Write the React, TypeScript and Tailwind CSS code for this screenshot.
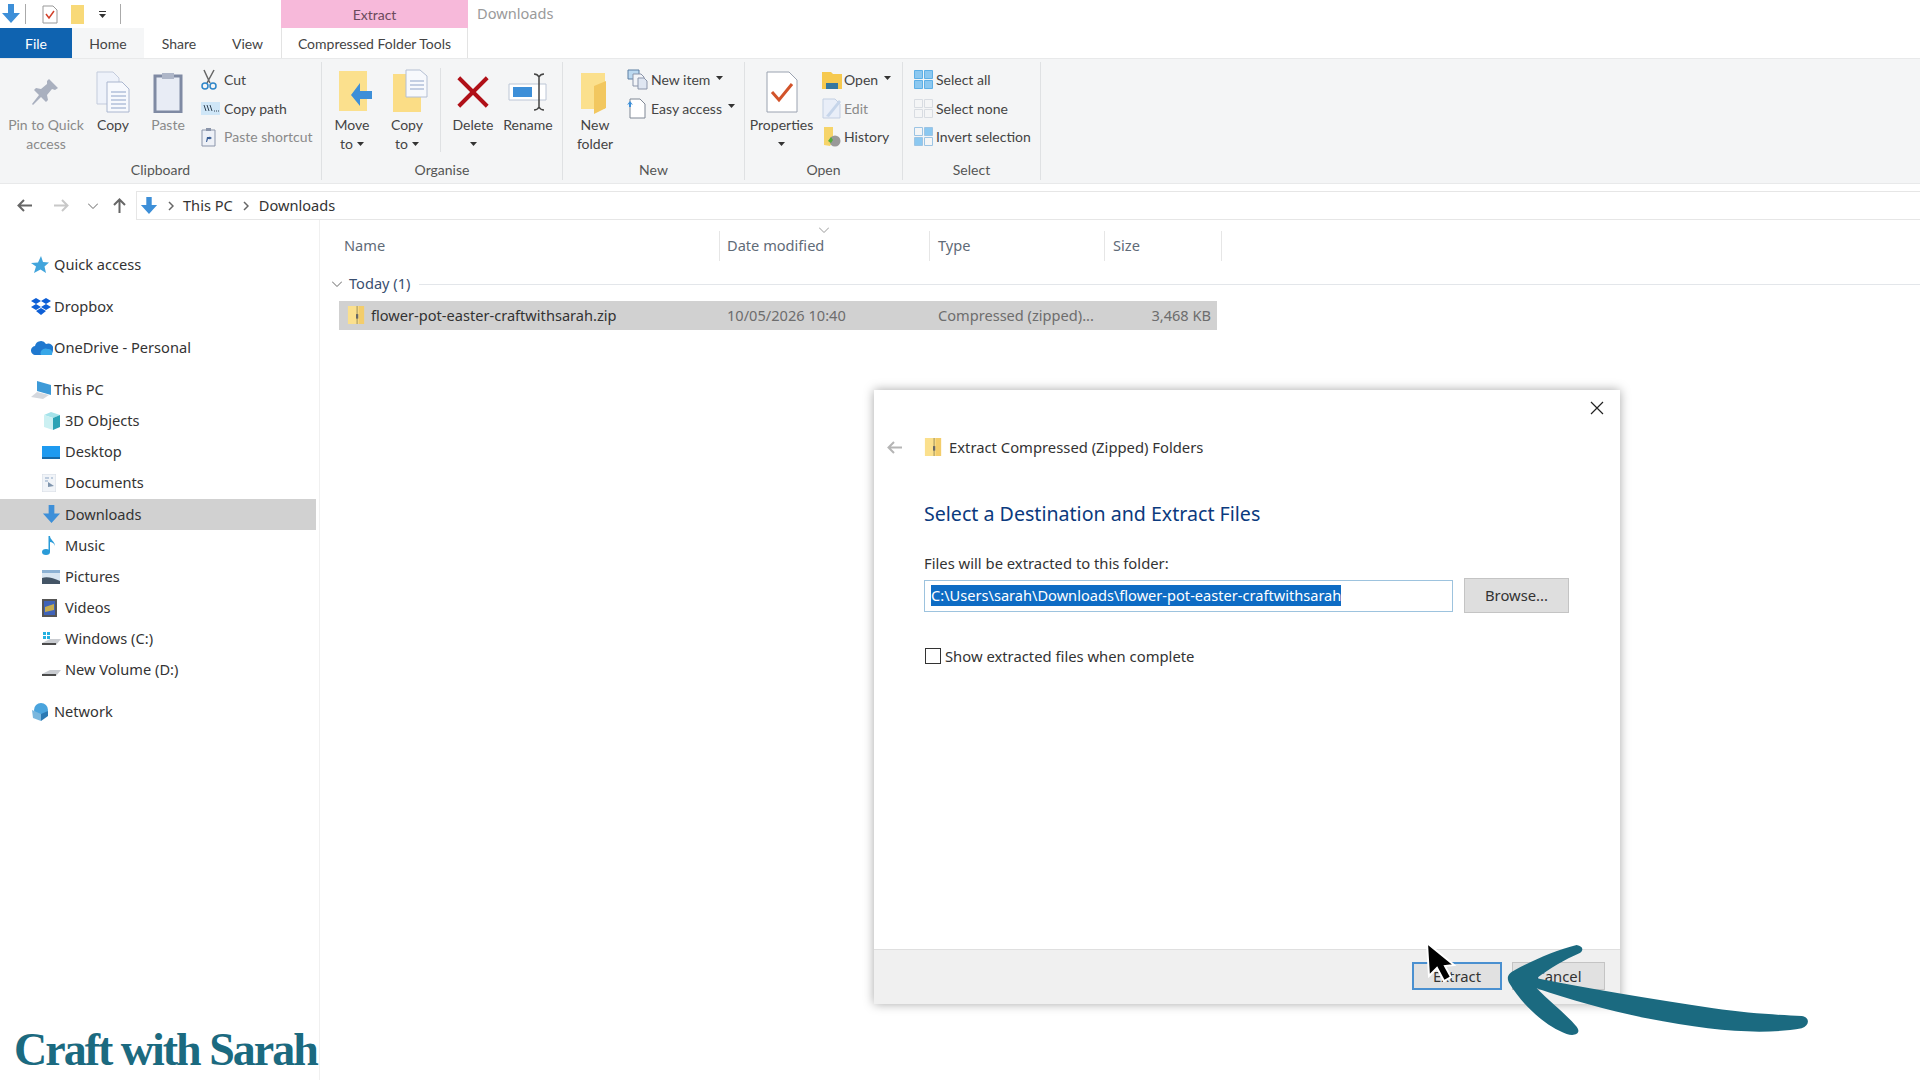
import type { ReactNode } from "react";

const Caret = () => (
  <svg width="7" height="4" viewBox="0 0 7 4" className="inline-block">
    <path d="M0 0h7L3.5 4z" fill="#333" />
  </svg>
);

const DownArrow = ({ size = 20 }: { size?: number }) => (
  <svg width={size} height={size} viewBox="0 0 20 20">
    <path d="M7 0h6v9h6l-9 10L1 9h6z" fill="#3d8fd8" />
  </svg>
);

const Zip = ({ size = 20 }: { size?: number }) => (
  <svg width={size} height={size} viewBox="0 0 20 20">
    <path d="M1 0h18v20H1z" fill="#fbe08d" />
    <path d="M13 0h6v20h-6z" fill="#f3cd6b" />
    <path d="M10.5 0h1.5v20h-1.5z" fill="#b5a468" />
    <path d="M10 9h2.5v5H10z" fill="#666" />
  </svg>
);

const FolderFlat = () => (
  <svg width="34" height="46" viewBox="0 0 34 46">
    <path d="M3 4h24v36H3z" fill="#fbe08d" />
    <path d="M16 17l12-5v27l-12 6z" fill="#f2c75f" />
  </svg>
);

const Pin = () => (
  <svg width="30" height="30" viewBox="0 0 30 30">
    <path d="M18 2l9 9-3 2-3-1-5 6 1 5-2 2-5-5-8 8-1-1 7-9-5-5 2-2 5 1 6-5 0-3z" fill="#a9b0bf" />
  </svg>
);

const CopyBig = () => (
  <svg width="34" height="42" viewBox="0 0 34 42">
    <path d="M1 1h16l6 6v26H1z" fill="#eef2fa" stroke="#c3cbdc" />
    <path d="M11 11h15l7 7v23H11z" fill="#f7f9fd" stroke="#aab6cf" />
    <path d="M15 21h15M15 25h15M15 29h15M15 33h15M15 37h15" stroke="#8fa3c8" />
  </svg>
);

const PasteBig = () => (
  <svg width="30" height="42" viewBox="0 0 30 42">
    <path d="M2 5h26v36H2z" fill="#e8ecf5" stroke="#7f8aa3" strokeWidth="3" />
    <path d="M9 2h12v6H9z" fill="#aeb6c8" />
  </svg>
);

const Scissors = () => (
  <svg width="16" height="22" viewBox="0 0 16 22">
    <path d="M3 1l6 13M13 1L6 14" stroke="#666" strokeWidth="1.5" />
    <circle cx="4" cy="17" r="3" fill="none" stroke="#2f86c9" strokeWidth="1.5" />
    <circle cx="12" cy="17" r="3" fill="none" stroke="#2f86c9" strokeWidth="1.5" />
  </svg>
);

const CopyPath = () => (
  <svg width="19" height="13" viewBox="0 0 19 13">
    <path d="M0 0h19v13H0z" fill="#cfe6f7" />
    <path d="M3 3l2 6M6 3l2 6M9 3l2 6" stroke="#345" strokeWidth="1" />
    <path d="M13 9h1M15 9h1M17 9h1" stroke="#345" />
  </svg>
);

const PasteShortcut = () => (
  <svg width="15" height="20" viewBox="0 0 15 20">
    <path d="M1 3h13v16H1z" fill="#eef1f7" stroke="#8b95aa" />
    <path d="M5 1h5v3H5z" fill="#8b95aa" />
    <path d="M5 15l1-5h3l-1-1 3 2-3 2 1-1H7l-1 3z" fill="#3b5f95" />
  </svg>
);

const MoveTo = () => (
  <svg width="38" height="44" viewBox="0 0 38 44" className="translate-x-[5px]">
    <path d="M1 1h28v40H1z" fill="#fbe08d" />
    <path d="M34 21H22v-8L13 25l9 11v-7h12z" fill="#3d8fd8" />
  </svg>
);

const CopyTo = () => (
  <svg width="36" height="46" viewBox="0 0 36 46" className="translate-x-[3px]">
    <path d="M1 5h28v38H1z" fill="#fbdd86" />
    <path d="M14 1h14l7 6v21H14z" fill="#f7f9fd" stroke="#b4bfd3" />
    <path d="M18 12h14M18 16h14M18 20h14" stroke="#8fa3c8" />
  </svg>
);

const RedX = () => (
  <svg width="32" height="32" viewBox="0 0 36 36">
    <path d="M2 2l32 32M34 2L2 34" stroke="#b01018" strokeWidth="4.5" />
  </svg>
);

const RenameIcon = () => (
  <svg width="40" height="38" viewBox="0 0 40 38">
    <path d="M1 11h37v16H1z" fill="#fff" stroke="#bcc6d6" />
    <path d="M5 14h19v10H5z" fill="#3d8fd8" />
    <path d="M26 1c2 0 4 1 5 3 1-2 3-3 5-3M31 4v30M26 37c2 0 4-1 5-3 1 2 3 3 5 3" fill="none" stroke="#444" strokeWidth="1.5" />
  </svg>
);

const NewItem = () => (
  <svg width="21" height="21" viewBox="0 0 21 21">
    <path d="M1 1h11v9H1z" fill="#bcd9f0" stroke="#5d7ea3" />
    <path d="M6 5h8l3 3v9H6z" fill="#f2f4f8" stroke="#8b95aa" />
    <path d="M11 9h6l3 3v8h-9z" fill="#dfe6f2" stroke="#8b95aa" />
  </svg>
);

const EasyAccess = () => (
  <svg width="19" height="22" viewBox="0 0 19 22">
    <path d="M3 2h10l5 5v14H3z" fill="#fff" stroke="#7f8794" />
    <path d="M0 8l3-4 3 4-2-1v3H2V7z" fill="#3d8fd8" />
  </svg>
);

const PropertiesIcon = () => (
  <svg width="32" height="42" viewBox="0 0 32 42">
    <path d="M1 1h22l8 8v32H1z" fill="#fff" stroke="#9aa2b0" />
    <path d="M6 21l7 8L26 13" fill="none" stroke="#d2532a" strokeWidth="3" />
  </svg>
);

const OpenIcon = () => (
  <svg width="20" height="18" viewBox="0 0 20 18">
    <path d="M0 1h9l2 2h9v15H0z" fill="#f6c94f" />
    <path d="M4 12h12v6H4z" fill="#35779f" />
  </svg>
);

const EditIcon = () => (
  <svg width="20" height="21" viewBox="0 0 20 21">
    <path d="M1 1h12l5 5v14H1z" fill="#e9eef8" stroke="#c3cfe2" />
    <path d="M4 18L17 2l2 2L7 19z" fill="#c6d5ea" />
  </svg>
);

const HistoryIcon = () => (
  <svg width="20" height="21" viewBox="0 0 20 21">
    <path d="M2 1h9v14l-3 5-6-1z" fill="#f6d469" />
    <circle cx="13" cy="15" r="5.5" fill="#999" />
    <path d="M6 15l3-4 2 3-2 3z" fill="#55ac3d" />
  </svg>
);

const Grid = ({ cells, line = "#d8dce2" }: { cells: [string, string, string, string]; line?: string }) => (
  <svg width="19" height="19" viewBox="0 0 19 19">
    <path d="M.5.5h8v8h-8z" fill={cells[0]} stroke={line} />
    <path d="M10.5.5h8v8h-8z" fill={cells[1]} stroke={line} />
    <path d="M.5 10.5h8v8h-8z" fill={cells[2]} stroke={line} />
    <path d="M10.5 10.5h8v8h-8z" fill={cells[3]} stroke={line} />
  </svg>
);

const Star = () => (
  <svg width="18" height="18" viewBox="0 0 18 18">
    <path d="M10 0l2 6 6 .5-4.5 4 1.5 6.5-5.5-3.5L3 17l2-6.5L0 7l7-.5z" fill="#42a5dc" />
  </svg>
);

const Dropbox = () => (
  <svg width="20" height="18" viewBox="0 0 20 18">
    <path d="M5 0l5 3-5 3-5-3zM15 0l5 3-5 3-5-3zM5 6l5 3-5 3-5-3zM15 6l5 3-5 3-5-3zM10 10l5 3-5 4-5-4z" fill="#0d5fd6" />
  </svg>
);

const Cloud = () => (
  <svg width="22" height="14" viewBox="0 0 22 14">
    <path d="M5 14a4.5 4.5 0 0 1-1-9 6 6 0 0 1 11-2 5 5 0 0 1 7 6c0 3-2 5-4 5z" fill="#1f78cf" />
    <path d="M10 14c-2-4 3-8 7-6 3 0 5 2 4 6z" fill="#38a7e8" />
  </svg>
);

const Laptop = () => (
  <svg width="21" height="18" viewBox="0 0 21 18">
    <path d="M6 0l14 4v10L6 10z" fill="#3d9ad8" />
    <path d="M0 16l6-5 12 3-6 4z" fill="#d4d8de" />
  </svg>
);

const Cube = () => (
  <svg width="18" height="18" viewBox="0 0 18 18">
    <path d="M9 0l9 3-7 3-9-3z" fill="#a5e3ea" />
    <path d="M2 3l9 3v12l-9-3z" fill="#cbf0f2" />
    <path d="M11 6l7-3v12l-7 3z" fill="#2aa3b5" />
  </svg>
);

const Desktop = () => (
  <svg width="18" height="13" viewBox="0 0 18 13">
    <path d="M0 0h18v13H0z" fill="#1e9af0" />
    <path d="M0 11h18v2H0z" fill="#1669a8" />
  </svg>
);

const Docs = () => (
  <svg width="14" height="18" viewBox="0 0 14 18">
    <path d="M0 0h14v18H0z" fill="#f1f4f8" stroke="#d6dce5" />
    <path d="M3 4h4M9 4h2M3 7h3" stroke="#8ba5c4" />
    <path d="M6 8l6 4-6 1z" fill="#7f95ad" />
  </svg>
);

const Music = () => (
  <svg width="14" height="19" viewBox="0 0 14 19">
    <ellipse cx="4" cy="16" rx="4" ry="3" fill="#2a9bd8" />
    <path d="M6.5 16V0h1.5c0 4 5 5 5 10-1-3-3-4-5-4v10z" fill="#2a9bd8" />
  </svg>
);

const Pictures = () => (
  <svg width="18" height="14" viewBox="0 0 18 14">
    <path d="M0 0h18v14H0z" fill="#d8e6f2" />
    <path d="M0 0h18v3H0z" fill="#8db2d4" />
    <path d="M0 8c5-2 11 0 18 3v3H0z" fill="#456" />
  </svg>
);

const Videos = () => (
  <svg width="15" height="18" viewBox="0 0 15 18">
    <path d="M0 0h15v18H0z" fill="#555" />
    <path d="M2 2h11v14H2z" fill="#3f63b8" />
    <path d="M3 8l9-3v6l-9 2z" fill="#c7ad50" />
  </svg>
);

const Drive = ({ windows = false }: { windows?: boolean }) => (
  <svg width="19" height="15" viewBox="0 0 19 15">
    {windows && <path d="M1 1h3v3H1zM5 1h3v3H5zM1 5h3v3H1zM5 5h3v3H5z" fill="#23b0e0" />}
    <path d="M0 12l8-4h11l-5 6H1z" fill="#c9ccd1" />
    <path d="M0 12h14v2H0z" fill="#4b4b4b" />
  </svg>
);

const Globe = () => (
  <svg width="18" height="18" viewBox="0 0 18 18">
    <circle cx="10" cy="7" r="7" fill="#4aa4dd" />
    <path d="M1 7l9 4v7L2 15z" fill="#7ab7de" />
    <path d="M10 11l7-3v5l-7 5z" fill="#2b79b3" />
  </svg>
);

const Large = ({ w, icon, lines, caret, dim }: { w: number; icon: ReactNode; lines: string[]; caret?: boolean; dim?: boolean }) => (
  <div style={{ width: w }} className={`flex flex-col items-center pt-[8px] ${dim ? "text-[#8a8a8a]" : "text-[#444]"}`}>
    <div className="flex h-[44.5px] items-center justify-center">{icon}</div>
    {lines.map((l, i) => (
      <div key={l} className="flex h-[19.5px] items-center gap-1 whitespace-nowrap">
        {l}
        {caret && lines.length > 1 && i === lines.length - 1 && <Caret />}
      </div>
    ))}
    {caret && lines.length === 1 && (
      <div className="flex h-[19.5px] items-center">
        <Caret />
      </div>
    )}
  </div>
);

const Small = ({ icon, label, caret, dim, w = 23 }: { icon: ReactNode; label: string; caret?: boolean; dim?: boolean; w?: number }) => (
  <div className={`flex h-[28.5px] items-center whitespace-nowrap ${dim ? "text-[#8a8a8a]" : "text-[#444]"}`}>
    <div style={{ width: w }} className="flex shrink-0 items-center">
      {icon}
    </div>
    {label}
    {caret && (
      <span className="ml-[6px] flex -translate-y-[2px]">
        <Caret />
      </span>
    )}
  </div>
);

const Group = ({ w, label, children }: { w: number; label: string; children: ReactNode }) => (
  <div style={{ width: w }} className="my-[3px] flex flex-col border-r border-[#dfe1e3]">
    <div className="flex h-[98px]">{children}</div>
    <div className="flex h-[22px] items-center justify-center text-[#555]">{label}</div>
  </div>
);

const SmallCol = ({ children, ml }: { children: ReactNode; ml: number }) => (
  <div style={{ marginLeft: ml }} className="flex flex-col pt-[3.5px]">
    {children}
  </div>
);

const navItems: { label: string; icon: ReactNode; sub?: boolean; active?: boolean; gap?: boolean }[] = [
  { label: "Quick access", icon: <Star /> },
  { label: "Dropbox", icon: <Dropbox />, gap: true },
  { label: "OneDrive - Personal", icon: <Cloud />, gap: true },
  { label: "This PC", icon: <Laptop />, gap: true },
  { label: "3D Objects", icon: <Cube />, sub: true },
  { label: "Desktop", icon: <Desktop />, sub: true },
  { label: "Documents", icon: <Docs />, sub: true },
  { label: "Downloads", icon: <DownArrow size={19} />, sub: true, active: true },
  { label: "Music", icon: <Music />, sub: true },
  { label: "Pictures", icon: <Pictures />, sub: true },
  { label: "Videos", icon: <Videos />, sub: true },
  { label: "Windows (C:)", icon: <Drive windows />, sub: true },
  { label: "New Volume (D:)", icon: <Drive />, sub: true },
  { label: "Network", icon: <Globe />, gap: true },
];

const Chevron = ({ color = "#666" }: { color?: string }) => (
  <svg width="10" height="6" viewBox="0 0 10 6">
    <path d="M0 .5l5 5 5-5" fill="none" stroke={color} />
  </svg>
);

const Crumb = () => (
  <svg width="6" height="10" viewBox="0 0 6 10">
    <path d="M1 1l4 4-4 4" fill="none" stroke="#666" strokeWidth="1.5" />
  </svg>
);

const NavArrow = ({ color, flip }: { color: string; flip?: boolean }) => (
  <svg width="15" height="13" viewBox="0 0 15 13" className={flip ? "rotate-180" : ""}>
    <path d="M7 1L1.5 6.5 7 12M2 6.5h13" fill="none" stroke={color} strokeWidth="2" />
  </svg>
);

export default function App() {
  return (
    <div className="relative flex h-[1080px] w-[1920px] flex-col overflow-hidden bg-white font-['Noto_Sans',sans-serif] text-[14.6px] text-[#444]">
      {/* title bar */}
      <div className="flex h-[28px] items-center">
        <div className="flex h-full w-[281px] items-center pl-[1px]">
          <DownArrow size={20} />
          <div className="ml-[4px] h-[20px] w-px bg-[#aaa]" />
          <div className="ml-[16px]">
            <svg width="16" height="19" viewBox="0 0 16 19">
              <path d="M1 1h10l4 4v13H1z" fill="#fff" stroke="#999" />
              <path d="M4 9l3 4 5-7" fill="none" stroke="#d2402a" strokeWidth="1.5" />
            </svg>
          </div>
          <div className="ml-[13px] h-[19px] w-[13px] bg-[#f8d978]" />
          <div className="ml-[15px] flex flex-col items-center gap-[2px]">
            <div className="h-px w-[7px] bg-[#333]" />
            <Caret />
          </div>
          <div className="ml-[14px] h-[20px] w-px bg-[#aaa]" />
        </div>
        <div className="flex h-full w-[187px] items-center justify-center bg-[#f7b9da] font-['Lato',sans-serif] text-[14px] text-[#6b4a5c]">Extract</div>
        <div className="ml-[9px] text-[#9a9a9a]">Downloads</div>
      </div>

      {/* ribbon tabs */}
      <div className="flex h-[30px] font-['Lato',sans-serif] text-[14px]">
        <div className="flex w-[72px] items-center justify-center bg-[#0f63b0] text-white">File</div>
        <div className="flex w-[72px] items-center justify-center bg-[#f5f6f7]">Home</div>
        <div className="flex w-[70px] items-center justify-center">Share</div>
        <div className="flex w-[67px] items-center justify-center">View</div>
        <div className="flex w-[187px] items-center justify-center border-x border-[#e3e3e3] whitespace-nowrap">Compressed Folder Tools</div>
      </div>

      {/* ribbon */}
      <div className="flex h-[126px] border-y border-[#e8e9ea] bg-[#f4f5f6] font-['Lato',sans-serif] text-[14px]">
        <Group w={322} label="Clipboard">
          <div className="w-[4px]" />
          <Large w={84} icon={<Pin />} lines={["Pin to Quick", "access"]} dim />
          <Large w={50} icon={<CopyBig />} lines={["Copy"]} />
          <Large w={60} icon={<PasteBig />} lines={["Paste"]} dim />
          <SmallCol ml={3}>
            <Small icon={<Scissors />} label="Cut" />
            <Small icon={<CopyPath />} label="Copy path" />
            <Small icon={<PasteShortcut />} label="Paste shortcut" dim />
          </SmallCol>
        </Group>
        <Group w={241} label="Organise">
          <div className="w-[3px]" />
          <Large w={54} icon={<MoveTo />} lines={["Move", "to"]} caret />
          <Large w={56} icon={<CopyTo />} lines={["Copy", "to"]} caret />
          <div className="mx-[5px] my-[6px] w-px bg-[#dfe1e3]" />
          <Large w={54} icon={<RedX />} lines={["Delete"]} caret />
          <Large w={56} icon={<RenameIcon />} lines={["Rename"]} />
        </Group>
        <Group w={182} label="New">
          <div className="w-[2px]" />
          <Large w={60} icon={<FolderFlat />} lines={["New", "folder"]} />
          <SmallCol ml={2}>
            <Small icon={<NewItem />} label="New item" caret w={24} />
            <Small icon={<EasyAccess />} label="Easy access" caret w={24} />
          </SmallCol>
        </Group>
        <Group w={158} label="Open">
          <Large w={73} icon={<PropertiesIcon />} lines={["Properties"]} caret />
          <SmallCol ml={4}>
            <Small icon={<OpenIcon />} label="Open" caret w={22} />
            <Small icon={<EditIcon />} label="Edit" dim w={22} />
            <Small icon={<HistoryIcon />} label="History" w={22} />
          </SmallCol>
        </Group>
        <Group w={138} label="Select">
          <SmallCol ml={11}>
            <Small icon={<Grid cells={["#8cc8f0", "#8cc8f0", "#8cc8f0", "#8cc8f0"]} line="#5fb0e6" />} label="Select all" w={22} />
            <Small icon={<Grid cells={["#f4f5f6", "#f4f5f6", "#f4f5f6", "#f4f5f6"]} />} label="Select none" w={22} />
            <Small icon={<Grid cells={["#f4f5f6", "#8cc8f0", "#8cc8f0", "#f4f5f6"]} line="#9cc4e4" />} label="Invert selection" w={22} />
          </SmallCol>
        </Group>
      </div>

      {/* address bar */}
      <div className="mt-[7px] flex h-[29px]">
        <div className="flex w-[136px] items-center">
          <div className="ml-[17px]">
            <NavArrow color="#666" />
          </div>
          <div className="ml-[22px]">
            <NavArrow color="#c8c8c8" flip />
          </div>
          <div className="ml-[19px]">
            <Chevron />
          </div>
          <svg width="13" height="15" viewBox="0 0 13 15" className="ml-[15px]">
            <path d="M6.5 15V2M1 7l5.5-5.5L12 7" fill="none" stroke="#666" strokeWidth="2" />
          </svg>
        </div>
        <div className="flex flex-1 items-center border-y border-l border-[#e6e6e6] pl-[3px] text-[#333]">
          <DownArrow size={18} />
          <span className="ml-[10px]">
            <Crumb />
          </span>
          <span className="ml-[9px]">This PC</span>
          <span className="ml-[10px]">
            <Crumb />
          </span>
          <span className="ml-[10px]">Downloads</span>
        </div>
      </div>

      {/* body */}
      <div className="flex flex-1">
        <div className="w-[320px] border-r border-[#f0f0f0] pt-[29.5px]">
          {navItems.map((n) => (
            <div
              key={n.label}
              className={`flex h-[31.1px] w-[316px] items-center text-[#333] ${n.active ? "bg-[#d1d1d1]" : ""} ${n.gap ? "mt-[10.6px]" : ""} ${n.sub ? "pl-[42px]" : "pl-[31px]"}`}
            >
              <div className="flex w-[23px] shrink-0 items-center">{n.icon}</div>
              {n.label}
            </div>
          ))}
        </div>
        <div className="flex flex-1 flex-col">
          <div className="relative mt-[11px] flex h-[30px] items-center text-[#5f6b78]">
            <div className="w-[399px] pl-[24px]">Name</div>
            <div className="flex h-full w-[210px] items-center border-l border-[#e6e6e6] pl-[7px]">Date modified</div>
            <div className="flex h-full w-[175px] items-center border-l border-[#e6e6e6] pl-[8px]">Type</div>
            <div className="flex h-full w-[118px] items-center border-x border-[#e6e6e6] pl-[8px]">Size</div>
            <div className="absolute left-[499px] -top-[4px]">
              <Chevron color="#999" />
            </div>
          </div>
          <div className="mt-[11px] flex h-[24px] items-center pl-[12px] text-[#3a4f70]">
            <Chevron />
            <span className="ml-[7px]">Today (1)</span>
            <div className="ml-[9px] h-px flex-1 bg-[#e3e6ea]" />
          </div>
          <div className="ml-[19px] mt-[5px] flex h-[29px] w-[878px] items-center bg-[#d1d1d1] text-[#6d6d6d]">
            <div className="flex w-[388px] items-center pl-[8px] text-[#333]">
              <Zip size={18} />
              <span className="ml-[6px]">flower-pot-easter-craftwithsarah.zip</span>
            </div>
            <div className="w-[211px]">10/05/2026 10:40</div>
            <div className="w-[170px] whitespace-nowrap">Compressed (zipped)...</div>
            <div className="w-[103px] text-right">3,468 KB</div>
          </div>
        </div>
      </div>

      {/* extract dialog */}
      <div className="absolute left-[874px] top-[390px] flex h-[614px] w-[746px] flex-col bg-white text-[14.8px] shadow-[0_0_10px_rgba(0,0,0,0.35)]">
        <div className="flex justify-end pr-[16px] pt-[11px]">
          <svg width="14" height="14" viewBox="0 0 14 14">
            <path d="M1 1l12 12M13 1L1 13" stroke="#222" strokeWidth="1.2" />
          </svg>
        </div>
        <div className="mt-[20px] flex h-[24px] items-center pl-[13px] text-[#333]">
          <NavArrow color="#b5b5b5" />
          <div className="ml-[22px]">
            <Zip size={18} />
          </div>
          <span className="ml-[7px]">Extract Compressed (Zipped) Folders</span>
        </div>
        <div className="mt-[40px] h-[30px] pl-[50px] text-[19.6px] leading-[30px] text-[#0b3a7e]">Select a Destination and Extract Files</div>
        <div className="mt-[24px] h-[20px] pl-[50px] leading-[20px] text-[#333]">Files will be extracted to this folder:</div>
        <div className="mt-[5px] flex h-[35px] items-center pl-[50px]">
          <div className="flex h-[32px] w-[529px] items-center border border-[#9dc3de] pl-[6px]">
            <span className="bg-[#0e6cc4] text-[14.6px] text-white">C:\Users\sarah\Downloads\flower-pot-easter-craftwithsarah</span>
          </div>
          <div className="ml-[11px] flex h-[35px] w-[105px] items-center justify-center border border-[#c4c4c4] bg-[#dedede] text-[#333]">Browse...</div>
        </div>
        <div className="mt-[33px] flex h-[20px] items-center pl-[51px] text-[#333]">
          <div className="h-[16px] w-[16px] border border-[#333] bg-white" />
          <span className="ml-[4px]">Show extracted files when complete</span>
        </div>
        <div className="mt-auto flex h-[55px] items-start justify-end gap-[10px] border-t border-[#dfdfdf] bg-[#f0f0f0] pr-[15px] pt-[12px] text-[#333]">
          <div className="flex h-[28px] w-[90px] items-center justify-center border-2 border-[#4a90d0] bg-[#e1e1e1]">Extract</div>
          <div className="flex h-[28px] w-[93px] items-center justify-center border border-[#c4c4c4] bg-[#e1e1e1]">Cancel</div>
        </div>
      </div>

      {/* cursor */}
      <svg width="44" height="56" viewBox="0 0 44 56" className="absolute left-[1418px] top-[933px]">
        <path d="M9 10l2 33 8-8 7 13 7-4-6-11 9-1z" fill="#000" stroke="#fff" strokeWidth="2" />
      </svg>

      {/* hand drawn arrow */}
      <svg width="460" height="130" viewBox="0 0 1380 390" className="absolute left-[1380px] top-[920px]">
        <path
          d="M590 75C610 78 612 92 598 100C555 118 510 145 470 175C620 205 800 235 1000 265C1100 280 1200 285 1265 288C1290 292 1290 315 1265 325C1150 345 1000 335 800 295C680 270 570 240 470 205C515 250 560 285 590 320C605 340 585 350 560 342C500 320 430 260 388 190C378 172 385 160 405 150C460 120 530 90 590 75Z"
          fill="#1b6a80"
        />
      </svg>

      {/* watermark */}
      <div className="absolute left-[14px] top-[1025px] font-['Liberation_Serif',serif] text-[46px] font-bold leading-[50px] tracking-[-2px] whitespace-nowrap text-[#1b6a80]">
        Craft with Sarah
      </div>
    </div>
  );
}
